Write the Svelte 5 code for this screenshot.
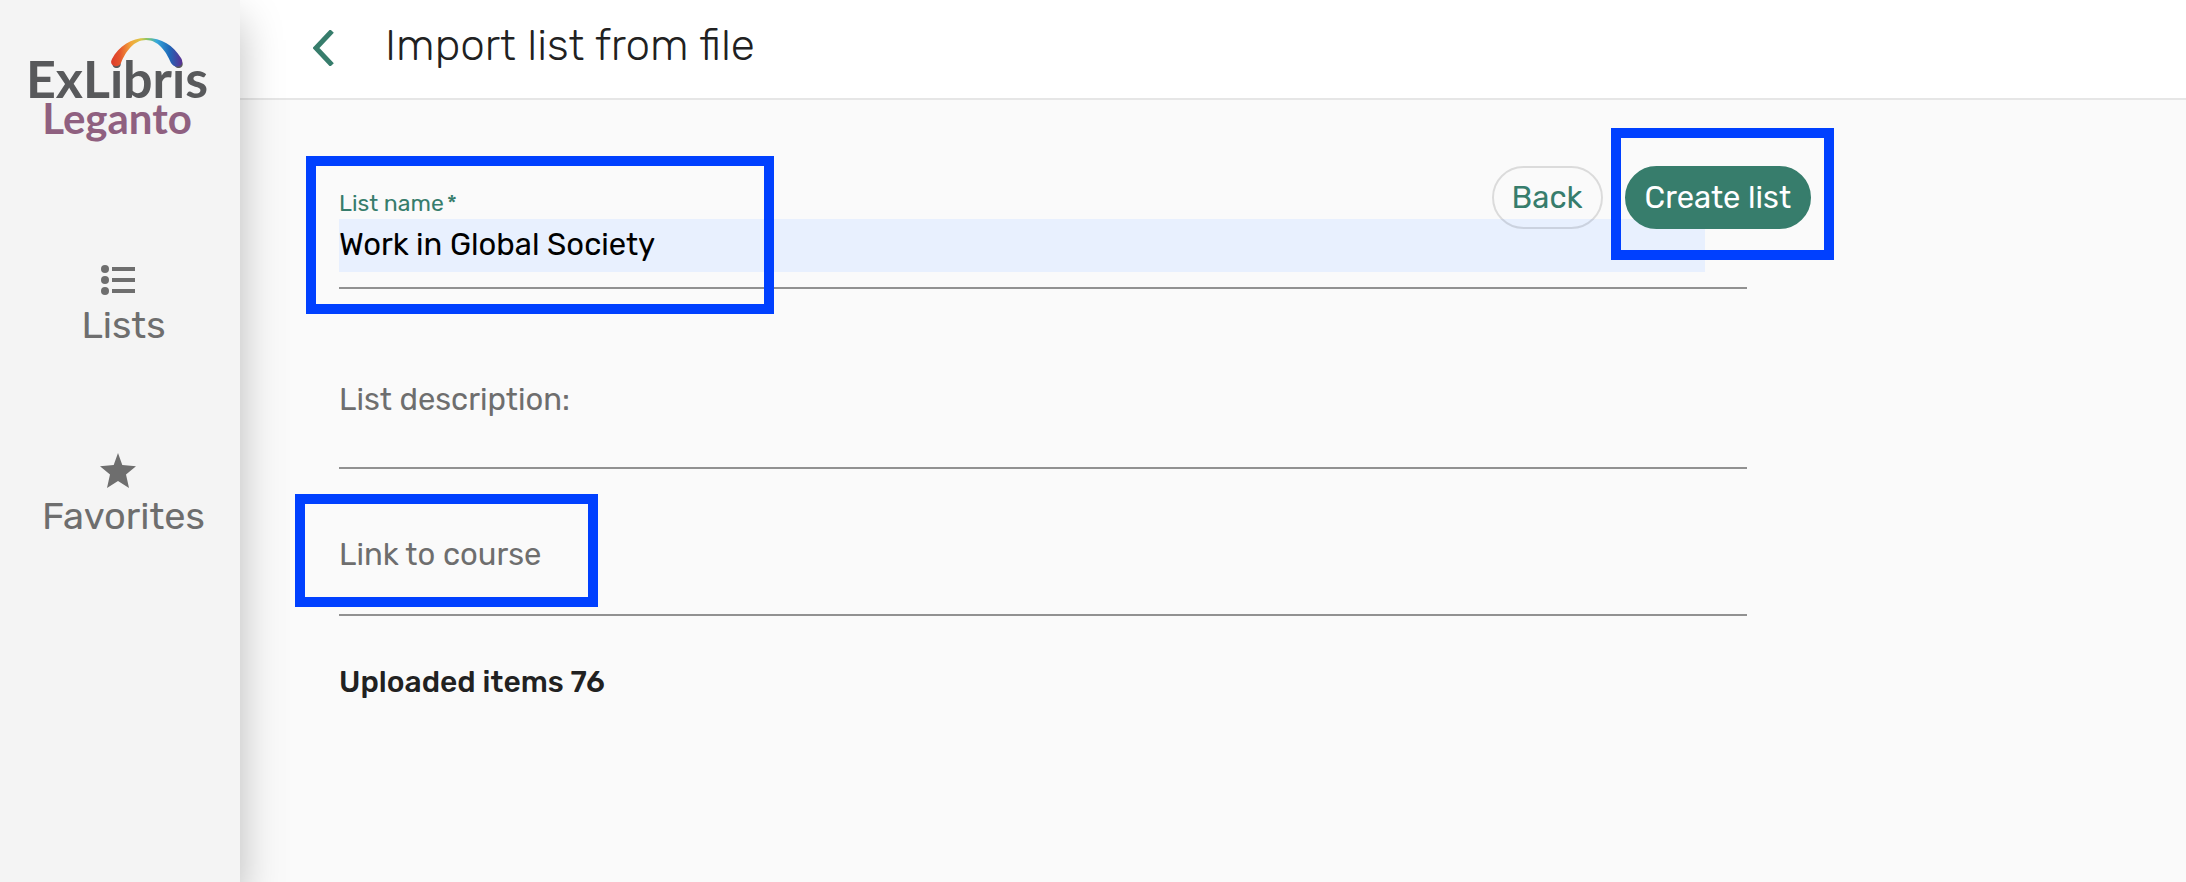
<script lang="ts">
	let listName = $state('Work in Global Society');
	let description = $state('');
	let course = $state('');

	const uploadedItems = 76;
</script>

<div class="app">
	<aside class="sidebar">
		<a class="logo" href="#home">
			<svg class="logo-arc" viewBox="0 0 72 30" aria-hidden="true">
				<defs>
					<linearGradient id="rainbow" x1="0" x2="1" y1="0" y2="0">
						<stop offset="0" stop-color="#dc3b2a" />
						<stop offset="0.12" stop-color="#e5532d" />
						<stop offset="0.28" stop-color="#f3a63a" />
						<stop offset="0.42" stop-color="#d9c648" />
						<stop offset="0.52" stop-color="#7dc36b" />
						<stop offset="0.64" stop-color="#35a9dc" />
						<stop offset="0.82" stop-color="#1f68b8" />
						<stop offset="1" stop-color="#5b2f91" />
					</linearGradient>
				</defs>
				<path
					fill="url(#rainbow)"
					d="M1 22C8 9 20 1 35 1C51 1 62 8 70 21C75 29 64 33 60 26C55 14 47 3 35 3C23 3 15 14 10 26C7 32 -3 29 1 22Z"
				/>
			</svg>
			<span class="logo-brand">ExLibris</span>
			<span class="logo-product">Leganto</span>
		</a>

		<nav aria-label="Main">
			<a class="nav-item" href="#lists">
				<svg viewBox="0 0 36 36" width="36" height="36" aria-hidden="true">
					<circle cx="5" cy="7" r="4" />
					<circle cx="5" cy="18" r="4" />
					<circle cx="5" cy="29" r="4" />
					<path d="M12 5H35V9H12ZM12 16H35V20H12ZM12 27H35V31H12Z" />
				</svg>
				<span>Lists</span>
			</a>
			<a class="nav-item" href="#favorites">
				<svg viewBox="0 0 36 36" width="36" height="36" aria-hidden="true">
					<path d="M18 0L22.300 12L36 13.200L26 21.500L29 35L18 28L7 35L10 21.500L0 13.200L13.700 12Z" />
				</svg>
				<span>Favorites</span>
			</a>
		</nav>
	</aside>

	<main>
		<header>
			<button class="back-arrow" type="button" aria-label="Go back">
				<svg viewBox="0 0 22 36" width="22" height="36" aria-hidden="true">
					<path d="M19 1L3 18L19 35" />
				</svg>
			</button>
			<h1>Import list from file</h1>
		</header>

		<form onsubmit={(e) => e.preventDefault()}>
			<div class="field name">
				<label class="floating" for="list-name">List name<span class="required">*</span></label>
				<input id="list-name" class="filled" type="text" bind:value={listName} />
				<div class="marker marker-name"></div>
			</div>

			<div class="field description">
				<label for="description">List description:</label>
				<input id="description" type="text" bind:value={description} />
			</div>

			<div class="field course">
				<label for="course">Link to course</label>
				<input id="course" type="text" bind:value={course} />
				<div class="marker marker-course"></div>
			</div>

			<p class="uploaded">Uploaded items {uploadedItems}</p>

			<div class="actions">
				<button class="btn" type="button">Back</button>
				<button class="btn primary" type="submit">Create list</button>
				<div class="marker marker-create"></div>
			</div>
		</form>
	</main>
</div>

<style>
	:global(body) {
		background: #fafafa;
	}

	.app {
		display: flex;
		min-height: 100vh;
		overflow: hidden;
		font-family: Rubik, Roboto, 'Liberation Sans', sans-serif;
		color: #212121;
	}

	.app * {
		box-sizing: border-box;
	}

	.sidebar {
		position: relative;
		z-index: 1;
		flex: 0 0 240px;
		background: #f4f4f4;
		box-shadow: 0 20px 40px rgba(0, 0, 0, 0.26);
	}

	.logo {
		position: relative;
		display: flex;
		flex-direction: column;
		align-items: center;
		padding: 52px 6px 0 0;
		font-family: Lato, 'Open Sans', sans-serif;
		text-decoration: none;
	}

	.logo-arc {
		position: absolute;
		top: 37px;
		left: 111px;
		width: 72px;
		height: 30px;
	}

	.logo-brand {
		font-size: 52px;
		font-weight: 700;
		line-height: 52px;
		color: #58595b;
	}

	.logo-product {
		font-size: 42px;
		font-weight: 700;
		line-height: 28px;
		color: #8f6080;
	}

	nav {
		display: flex;
		flex-direction: column;
		gap: 104px;
		padding-top: 130px;
	}

	.nav-item {
		display: flex;
		flex-direction: column;
		align-items: center;
		gap: 3px;
		padding-left: 7px;
		font-size: 38px;
		line-height: 48px;
		color: #6e6e6e;
		text-decoration: none;
	}

	.nav-item svg {
		margin-right: 12px;
		fill: currentColor;
	}

	main {
		flex: 1;
		min-width: 0;
	}

	header {
		display: flex;
		align-items: center;
		gap: 50px;
		height: 100px;
		padding: 0 73px 3px;
		background: #fff;
		border-bottom: 2px solid #e6e6e6;
	}

	.back-arrow {
		display: flex;
		padding: 0;
		background: none;
		border: none;
		cursor: pointer;
	}

	.back-arrow path {
		fill: none;
		stroke: #377d6c;
		stroke-width: 5;
	}

	h1 {
		margin: 0;
		padding-bottom: 6px;
		font-size: 44px;
		font-weight: 300;
		line-height: 52px;
	}

	form {
		position: relative;
		margin-right: 375px;
		padding: 87px 64px 0 99px;
	}

	.field {
		position: relative;
		display: flex;
		flex-direction: column;
		border-bottom: 2px solid #919191;
	}

	.name {
		padding-bottom: 15px;
	}

	.description {
		margin-top: 91px;
	}

	.course {
		margin-top: 66px;
	}

	label {
		font-size: 31px;
		line-height: 40px;
		color: #6e6e6e;
	}

	.floating {
		font-size: 23px;
		line-height: 32px;
		color: #377d6c;
	}

	.required {
		margin-left: 3px;
	}

	input {
		height: 47px;
		padding: 0;
		font: inherit;
		font-size: 31px;
		color: #000;
		background: none;
		border: none;
		outline: none;
	}

	.course input {
		height: 39px;
	}

	.filled {
		height: 53px;
		margin-right: 42px;
		padding-bottom: 2px;
		background: #e8f0fe;
	}

	.uploaded {
		margin: 46px 0 0;
		font-size: 30px;
		font-weight: 500;
		line-height: 40px;
	}

	.actions {
		position: absolute;
		top: 66px;
		right: 0;
		display: flex;
		gap: 22px;
	}

	.btn {
		height: 63px;
		padding: 0 18px;
		font: inherit;
		font-size: 31px;
		color: #377d6c;
		background: none;
		border: 2px solid rgba(0, 0, 0, 0.12);
		border-radius: 32px;
		cursor: pointer;
	}

	.primary {
		color: #fff;
		background: #377d6c;
		border-color: #377d6c;
	}

	/* highlight boxes drawn over the form */
	.marker {
		position: absolute;
		border: 10px solid #0040ff;
		pointer-events: none;
	}

	.marker-name {
		top: -31px;
		left: -33px;
		width: 468px;
		height: 158px;
	}

	.marker-course {
		top: -41px;
		left: -44px;
		width: 303px;
		height: 113px;
	}

	.marker-create {
		top: -38px;
		right: -23px;
		width: 223px;
		height: 132px;
	}
</style>
